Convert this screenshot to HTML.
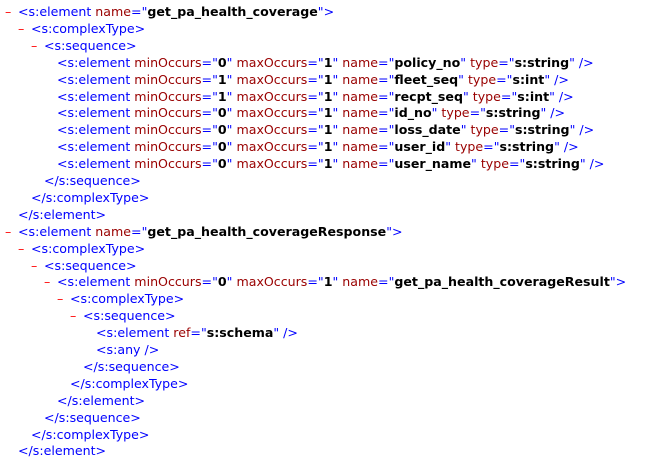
<!DOCTYPE html>
<html><head><meta charset="utf-8"><style>
body{margin:0;background:#fff;width:647px;height:462px;overflow:hidden;font-family:"DejaVu Sans","Liberation Sans",sans-serif;font-size:12.6px;}
.l{position:absolute;white-space:pre;height:17px;line-height:17px;}
.t{color:#0000ff}.a{color:#990000}.v{color:#000;font-weight:bold}.d{color:#ff0000;position:absolute}
</style></head><body>
<div id="c"></div>
<script>
var L=[
[1,1,'<t>&lt;s:element </t><a>name</a><t>="</t><v>get_pa_health_coverage</v><t>"&gt;</t>'],
[2,1,'<t>&lt;s:complexType&gt;</t>'],
[3,1,'<t>&lt;s:sequence&gt;</t>'],
[4,0,'<t>&lt;s:element </t><a>minOccurs</a><t>="</t><v>0</v><t>" </t><a>maxOccurs</a><t>="</t><v>1</v><t>" </t><a>name</a><t>="</t><v>policy_no</v><t>" </t><a>type</a><t>="</t><v>s:string</v><t>" /&gt;</t>'],
[4,0,'<t>&lt;s:element </t><a>minOccurs</a><t>="</t><v>1</v><t>" </t><a>maxOccurs</a><t>="</t><v>1</v><t>" </t><a>name</a><t>="</t><v>fleet_seq</v><t>" </t><a>type</a><t>="</t><v>s:int</v><t>" /&gt;</t>'],
[4,0,'<t>&lt;s:element </t><a>minOccurs</a><t>="</t><v>1</v><t>" </t><a>maxOccurs</a><t>="</t><v>1</v><t>" </t><a>name</a><t>="</t><v>recpt_seq</v><t>" </t><a>type</a><t>="</t><v>s:int</v><t>" /&gt;</t>'],
[4,0,'<t>&lt;s:element </t><a>minOccurs</a><t>="</t><v>0</v><t>" </t><a>maxOccurs</a><t>="</t><v>1</v><t>" </t><a>name</a><t>="</t><v>id_no</v><t>" </t><a>type</a><t>="</t><v>s:string</v><t>" /&gt;</t>'],
[4,0,'<t>&lt;s:element </t><a>minOccurs</a><t>="</t><v>0</v><t>" </t><a>maxOccurs</a><t>="</t><v>1</v><t>" </t><a>name</a><t>="</t><v>loss_date</v><t>" </t><a>type</a><t>="</t><v>s:string</v><t>" /&gt;</t>'],
[4,0,'<t>&lt;s:element </t><a>minOccurs</a><t>="</t><v>0</v><t>" </t><a>maxOccurs</a><t>="</t><v>1</v><t>" </t><a>name</a><t>="</t><v>user_id</v><t>" </t><a>type</a><t>="</t><v>s:string</v><t>" /&gt;</t>'],
[4,0,'<t>&lt;s:element </t><a>minOccurs</a><t>="</t><v>0</v><t>" </t><a>maxOccurs</a><t>="</t><v>1</v><t>" </t><a>name</a><t>="</t><v>user_name</v><t>" </t><a>type</a><t>="</t><v>s:string</v><t>" /&gt;</t>'],
[3,0,'<t>&lt;/s:sequence&gt;</t>'],
[2,0,'<t>&lt;/s:complexType&gt;</t>'],
[1,0,'<t>&lt;/s:element&gt;</t>'],
[1,1,'<t>&lt;s:element </t><a>name</a><t>="</t><v>get_pa_health_coverageResponse</v><t>"&gt;</t>'],
[2,1,'<t>&lt;s:complexType&gt;</t>'],
[3,1,'<t>&lt;s:sequence&gt;</t>'],
[4,1,'<t>&lt;s:element </t><a>minOccurs</a><t>="</t><v>0</v><t>" </t><a>maxOccurs</a><t>="</t><v>1</v><t>" </t><a>name</a><t>="</t><v>get_pa_health_coverageResult</v><t>"&gt;</t>'],
[5,1,'<t>&lt;s:complexType&gt;</t>'],
[6,1,'<t>&lt;s:sequence&gt;</t>'],
[7,0,'<t>&lt;s:element </t><a>ref</a><t>="</t><v>s:schema</v><t>" /&gt;</t>'],
[7,0,'<t>&lt;s:any /&gt;</t>'],
[6,0,'<t>&lt;/s:sequence&gt;</t>'],
[5,0,'<t>&lt;/s:complexType&gt;</t>'],
[4,0,'<t>&lt;/s:element&gt;</t>'],
[3,0,'<t>&lt;/s:sequence&gt;</t>'],
[2,0,'<t>&lt;/s:complexType&gt;</t>'],
[1,0,'<t>&lt;/s:element&gt;</t>']
];
var h='';
L.forEach(function(r,i){
 var x=18+(r[0]-1)*13;var y=3+i*16.9;
 var s=r[2].replace(/<(\/?)([tav])>/g,function(m,c,k){return c?'</span>':'<span class="'+k+'">';});
 if(r[1])h+='<div class="l d" style="left:'+(x-13)+'px;top:'+y+'px">–</div>';
 h+='<div class="l" style="left:'+x+'px;top:'+y+'px">'+s+'</div>';
});
document.getElementById('c').innerHTML=h;
</script>
</body></html>
